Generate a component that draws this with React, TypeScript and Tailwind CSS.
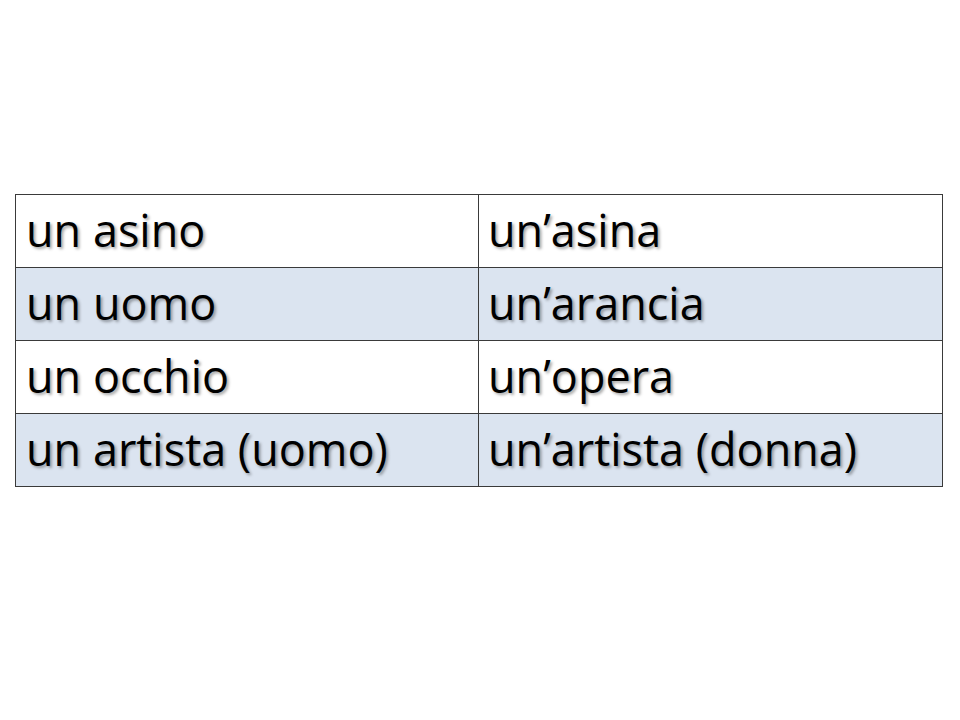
const rows: [string, string][] = [
  ['un asino', 'un’asina'],
  ['un uomo', 'un’arancia'],
  ['un occhio', 'un’opera'],
  ['un artista (uomo)', 'un’artista (donna)'],
];

export default function App() {
  return (
    <div className="w-[960px] h-[720px] bg-white pt-[194px] pl-[15px] font-['Open_Sans',sans-serif]">
      <div className="w-[928px] border-l border-t border-[#3a3a3a]">
        {rows.map(([left, right], i) => (
          <div
            key={left}
            className={`flex h-[73px] ${i % 2 === 1 ? 'bg-[#dbe4f0]' : 'bg-white'}`}
          >
            {[left, right].map((text, j) => (
              <div
                key={text}
                className={`flex items-center border-r border-b border-[#3a3a3a] pb-[4px] ${
                  j === 0 ? 'w-[463px] pl-[10px]' : 'flex-1 pl-[9px]'
                }`}
              >
                <span className="text-[45px] leading-none text-black [text-shadow:2px_2px_3px_rgba(0,0,0,0.35)]">
                  {text}
                </span>
              </div>
            ))}
          </div>
        ))}
      </div>
    </div>
  );
}
